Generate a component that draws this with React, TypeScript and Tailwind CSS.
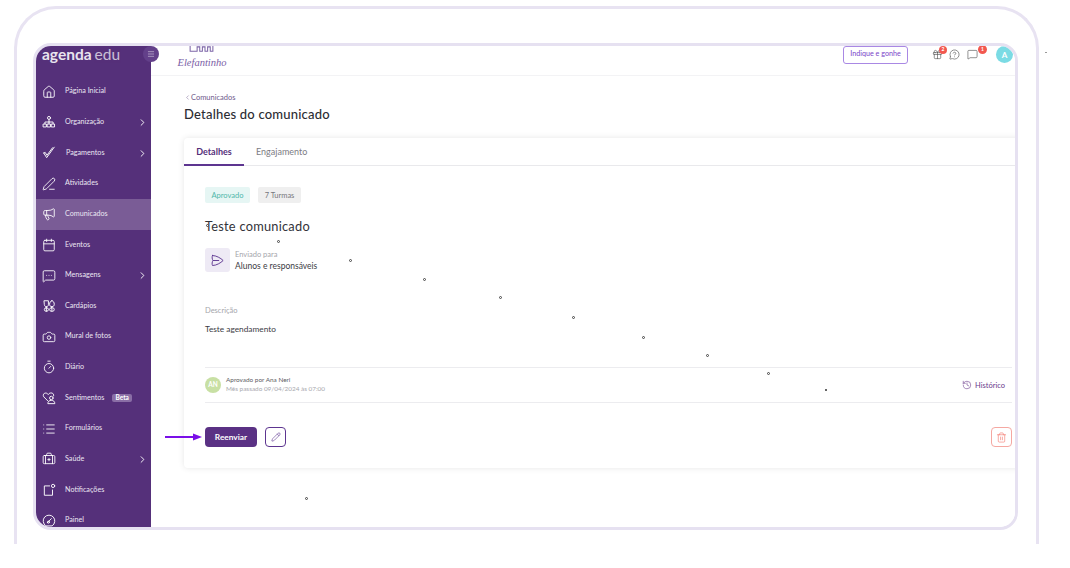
import React from "react";
import {
  Home, PenLine, Megaphone, Calendar, MessageSquareMore, Camera, Timer,
  List, BriefcaseMedical, ChevronRight, ChevronLeft,
  History, Trash2, Pencil, Gift, MessageCircleQuestion, MessageSquare, Menu,
} from "lucide-react";

const svgBase = { viewBox: "0 0 24 24", fill: "none", stroke: "currentColor", strokeWidth: 1.6, strokeLinecap: "round", strokeLinejoin: "round" } as const;
const Org = ({ size = 14, className = "" }: any) => (
  <svg {...svgBase} width={size} height={size} className={className}>
    <circle cx="12" cy="5" r="2.6" /><path d="M12 8v4M5 15v-3h14v3M12 12v3" />
    <rect x="2.5" y="15.5" width="5" height="5" /><rect x="9.5" y="15.5" width="5" height="5" /><rect x="16.5" y="15.5" width="5" height="5" />
  </svg>
);
const Pay = ({ size = 14, className = "" }: any) => (
  <svg {...svgBase} width={size} height={size} className={className}>
    <path d="M3 12l5 8L21 2" /><path d="M3 12l2.5-1 3 5L18 3" />
  </svg>
);
const Menus = ({ size = 14, className = "" }: any) => (
  <svg {...svgBase} width={size} height={size} className={className}>
    <path d="M4 3h7v7c0 2-1.5 3-3.5 3S4 12 4 10zM7.500 13v8" /><path d="M17 3c2.500 0 4 3 4 6s-1.500 4-4 4-4-1-4-4 1.500-6 4-6zM17 13v8" />
    <rect x="13" y="15" width="8" height="6" rx="3" /><rect x="4" y="15" width="7" height="6" rx="3" />
  </svg>
);
const Feel = ({ size = 14, className = "" }: any) => (
  <svg {...svgBase} width={size} height={size} className={className}>
    <path d="M10 17l-7-7c-2-3 0-7 3.500-6.500C9 3.500 10 6 11 6c1-2 3-3 6-2.500 2 .5 3.500 2.500 3 5" />
    <circle cx="16" cy="12" r="3" /><path d="M10 21c0-3 2.500-5 6-5s6 2 6 5z" />
  </svg>
);
const Notif = ({ size = 14, className = "" }: any) => (
  <svg {...svgBase} width={size} height={size} className={className}>
    <path d="M13 5H4v16h14v-9" /><circle cx="19" cy="5" r="2.800" />
  </svg>
);
const Panel = ({ size = 14, className = "" }: any) => (
  <svg {...svgBase} width={size} height={size} className={className}>
    <path d="M6 20a10 10 0 1 1 12 0z" /><path d="M9 15l7-7" /><circle cx="11" cy="14" r="1.800" />
  </svg>
);
const Sent = ({ size = 15, className = "" }: any) => (
  <svg {...svgBase} strokeWidth={1.5} width={size} height={size} className={className}>
    <path d="M4 4c6 0 13 4 17 8-4 4-11 8-17 8-1-2-1-6 1-8-2-2-2-6-1-8z" /><path d="M5 12h9" />
  </svg>
);

const rows: { label: string; Icon: any; arrow?: boolean; active?: boolean; beta?: boolean; shift?: boolean }[] = [
  { label: "Página Inicial", Icon: Home },
  { label: "Organização", Icon: Org, arrow: true },
  { label: "Pagamentos", Icon: Pay, arrow: true, shift: true },
  { label: "Atividades", Icon: PenLine },
  { label: "Comunicados", Icon: Megaphone, active: true },
  { label: "Eventos", Icon: Calendar },
  { label: "Mensagens", Icon: MessageSquareMore, arrow: true },
  { label: "Cardápios", Icon: Menus },
  { label: "Mural de fotos", Icon: Camera },
  { label: "Diário", Icon: Timer },
  { label: "Sentimentos", Icon: Feel, beta: true },
  { label: "Formulários", Icon: List },
  { label: "Saúde", Icon: BriefcaseMedical, arrow: true },
  { label: "Notificações", Icon: Notif },
  { label: "Painel", Icon: Panel },
];

const dots = [
  [278, 241], [350, 260], [424, 279], [500, 297], [573, 317], [643, 337], [707, 355], [768, 373], [306, 498], [207, 225],
];

export default function App() {
  return (
    <div className="relative h-[568px] w-[1070px] overflow-hidden bg-white pl-[14px] pt-[6px] font-['Lato',sans-serif]">
      <div className="h-[538px] w-[1025px] rounded-t-[42px] border-x-[3px] border-t-[3px] border-[#e8e3f2] pl-[16px] pt-[34px]">
        <div className="relative flex h-[487px] w-[985px] overflow-hidden rounded-[18px] border-[3px] border-[#e6e1f1]">
          <aside className="h-full w-[115px] shrink-0 overflow-hidden bg-[#55307a]">
            <div className="flex h-[30.5px] items-start pl-[6px] pt-[-1px] text-[15.5px] leading-[16px] text-[#e8e4ee]">
              <span className="font-bold">agenda</span>
              <span className="ml-[3px] font-normal opacity-80">edu</span>
            </div>
            {rows.map(({ label, Icon, arrow, active, beta, shift }) => (
              <div
                key={label}
                className={`flex h-[30.63px] items-center pl-[6px] pr-[3px] text-[7.2px] text-[#ebe6f2] ${active ? "bg-[#7a5c96]" : ""}`}
              >
                <Icon size={14} strokeWidth={1.5} className="shrink-0 text-white" />
                <span className={shift ? "ml-[10px]" : "ml-[9px]"}>{label}</span>
                {beta && (
                  <span className="ml-[8px] rounded-[2px] bg-[#8a6ea6] px-[3px] text-[6.5px] font-bold leading-[8px] text-white">Beta</span>
                )}
                {arrow && <ChevronRight size={11} strokeWidth={2} className="ml-auto text-white" />}
              </div>
            ))}
          </aside>

          <span className="absolute left-[107px] top-0 flex h-[16px] w-[16px] items-center justify-center rounded-full bg-[#63408a] text-[#c9bdd8]">
            <Menu size={8} strokeWidth={2} />
          </span>

          <main className="min-w-0 flex-1 overflow-hidden bg-white">
            <header className="flex h-[30px] items-start border-b border-[#f3f3f5] pl-[27px] pr-[2px]">
              <div className="relative flex h-[29px] w-[48px] flex-col items-center justify-end">
                <svg viewBox="0 0 28 8" className="absolute left-[10px] top-0 h-[7px] w-[27px]" fill="none" stroke="#7d66a8" strokeWidth="1.2">
                  <path d="M1 0v6h8V1h3v5h3V1h3v5h3V1h3v5h3V0" />
                </svg>
                <span className="mb-[7px] font-['Liberation_Serif',serif] text-[10.5px] italic leading-none text-[#7a5ea6]">Elefantinho</span>
              </div>
              <div className="ml-auto flex h-[17px] items-center">
                <button className="flex h-[18px] w-[65px] items-center justify-center rounded-[3px] border border-[#a988e4] text-[7.2px] text-[#7b45c9]">Indique e gonhe</button>
                <span className="relative ml-[24px] text-[#555]">
                  <Gift size={11} strokeWidth={1.4} />
                  <span className="absolute -right-[4px] -top-[3px] flex h-[8px] w-[8px] items-center justify-center rounded-full bg-[#f2584f] text-[5px] font-bold text-white">2</span>
                </span>
                <MessageCircleQuestion size={11} strokeWidth={1.4} className="ml-[6px] text-[#555]" />
                <span className="relative ml-[7px] text-[#555]">
                  <MessageSquare size={11} strokeWidth={1.4} />
                  <span className="absolute -right-[9px] -top-[4px] flex h-[9px] w-[9px] items-center justify-center rounded-full bg-[#f2584f] text-[5px] font-bold text-white">1</span>
                </span>
                <span className="ml-[18px] flex h-[17px] w-[17px] items-center justify-center rounded-full bg-[#7bdbe4] text-[8px] font-bold text-white">A</span>
              </div>
            </header>

            <div className="pl-[33px] pt-[16px]">
              <div className="flex items-center text-[7.5px] text-[#6f5a8c]">
                <ChevronLeft size={7} strokeWidth={1.6} />
                <span>Comunicados</span>
              </div>
              <h1 className="mt-[2px] text-[13px] font-medium leading-[18px] tracking-[0.2px] text-[#2c2c33]">Detalhes do comunicado</h1>

              <section className="mt-[15px] h-[330px] w-[860px] rounded-[4px] bg-white shadow-[0_0_6px_rgba(0,0,0,0.1)]">
                <div className="flex h-[28px] border-b border-[#e9e9ec] text-[9px]">
                  <div className="-mb-px flex w-[60px] items-center justify-center border-b-[2px] border-[#5d3590] font-bold text-[#55307a]">Detalhes</div>
                  <div className="ml-[12px] flex items-center text-[#7c7c84]">Engajamento</div>
                </div>

                <div className="w-[828px] pl-[21px] pt-[21px]">
                  <div className="flex gap-[8px] text-[7.5px]">
                    <span className="flex h-[16px] w-[45px] items-center justify-center rounded-[2px] bg-[#e6f6f4] text-[#4fb7aa]">Aprovado</span>
                    <span className="flex h-[16px] w-[43px] items-center justify-center rounded-[2px] bg-[#efefef] text-[#77777d]">7 Turmas</span>
                  </div>
                  <h2 className="mt-[14px] text-[12.8px] leading-[18px] tracking-[0.25px] text-[#33333a]">Teste comunicado</h2>
                  <div className="mt-[13px] flex items-start">
                    <span className="flex h-[24px] w-[25px] items-center justify-center rounded-[3px] bg-[#eeeaf5] text-[#5d3590]">
                      <Sent />
                    </span>
                    <div className="ml-[5px] flex flex-col pt-[1.500px]">
                      <span className="text-[7.5px] leading-[10px] text-[#a5a5ab]">Enviado para</span>
                      <span className="mt-[1.500px] text-[8.5px] leading-[11px] text-[#3c3c44]">Alunos e responsáveis</span>
                    </div>
                  </div>
                  <p className="mt-[34px] text-[7.5px] leading-[10px] text-[#a5a5ab]">Descrição</p>
                  <p className="mt-[8px] text-[8.3px] leading-[11px] text-[#3c3c44]">Teste agendamento</p>

                  <div className="mt-[32px] flex h-[36px] items-center border-y border-[#ececef] pr-[7px]">
                    <span className="flex h-[16px] w-[16px] items-center justify-center rounded-full bg-[#c8e0a4] text-[6.5px] font-bold text-white">AN</span>
                    <div className="ml-[5px] -mt-[2px] flex flex-col text-[6.4px] leading-[9px]">
                      <span className="text-[#5c5c64]">Aprovado por Ana Neri</span>
                      <span className="text-[#a8a8ae]">Mês passado 09/04/2024 às 07:00</span>
                    </div>
                    <span className="ml-auto flex items-center text-[7.5px] text-[#6a3a8c]">
                      <History size={10} strokeWidth={1.4} />
                      <span className="ml-[3px]">Histórico</span>
                    </span>
                  </div>

                  <div className="mt-[24px] flex items-center">
                    <button className="flex h-[20px] w-[52px] items-center justify-center rounded-[4px] bg-[#5a3184] text-[8.3px] font-bold text-white">Reenviar</button>
                    <button className="ml-[8px] flex h-[20px] w-[21px] items-center justify-center rounded-[4px] border border-[#5d3590] text-[#5d3590]">
                      <Pencil size={10} strokeWidth={1.4} />
                    </button>
                    <button className="ml-auto flex h-[20px] w-[21px] items-center justify-center rounded-[4px] border border-[#f5a8a2] text-[#f2665c]">
                      <Trash2 size={11} strokeWidth={1.2} />
                    </button>
                  </div>
                </div>
              </section>
            </div>
          </main>
        </div>
      </div>

      <svg className="absolute left-[164px] top-[433px] h-[8px] w-[40px]" viewBox="0 0 40 8" fill="none">
        <path d="M1 4h30" stroke="#7a0fe8" strokeWidth="2" />
        <path d="M29 0.500l9 3.500-9 3.500z" fill="#7a0fe8" />
      </svg>

      {dots.map(([x, y]) => (
        <span
          key={x}
          className="absolute h-[3px] w-[3px] rounded-full border border-[#444] bg-white"
          style={{ left: x - 1, top: y - 1 }}
        />
      ))}
      <span className="absolute left-[825px] top-[389px] h-[2px] w-[2px] bg-[#666]" />
      <span className="absolute left-[1045px] top-[52px] h-px w-[2px] bg-[#999]" />
    </div>
  );
}
